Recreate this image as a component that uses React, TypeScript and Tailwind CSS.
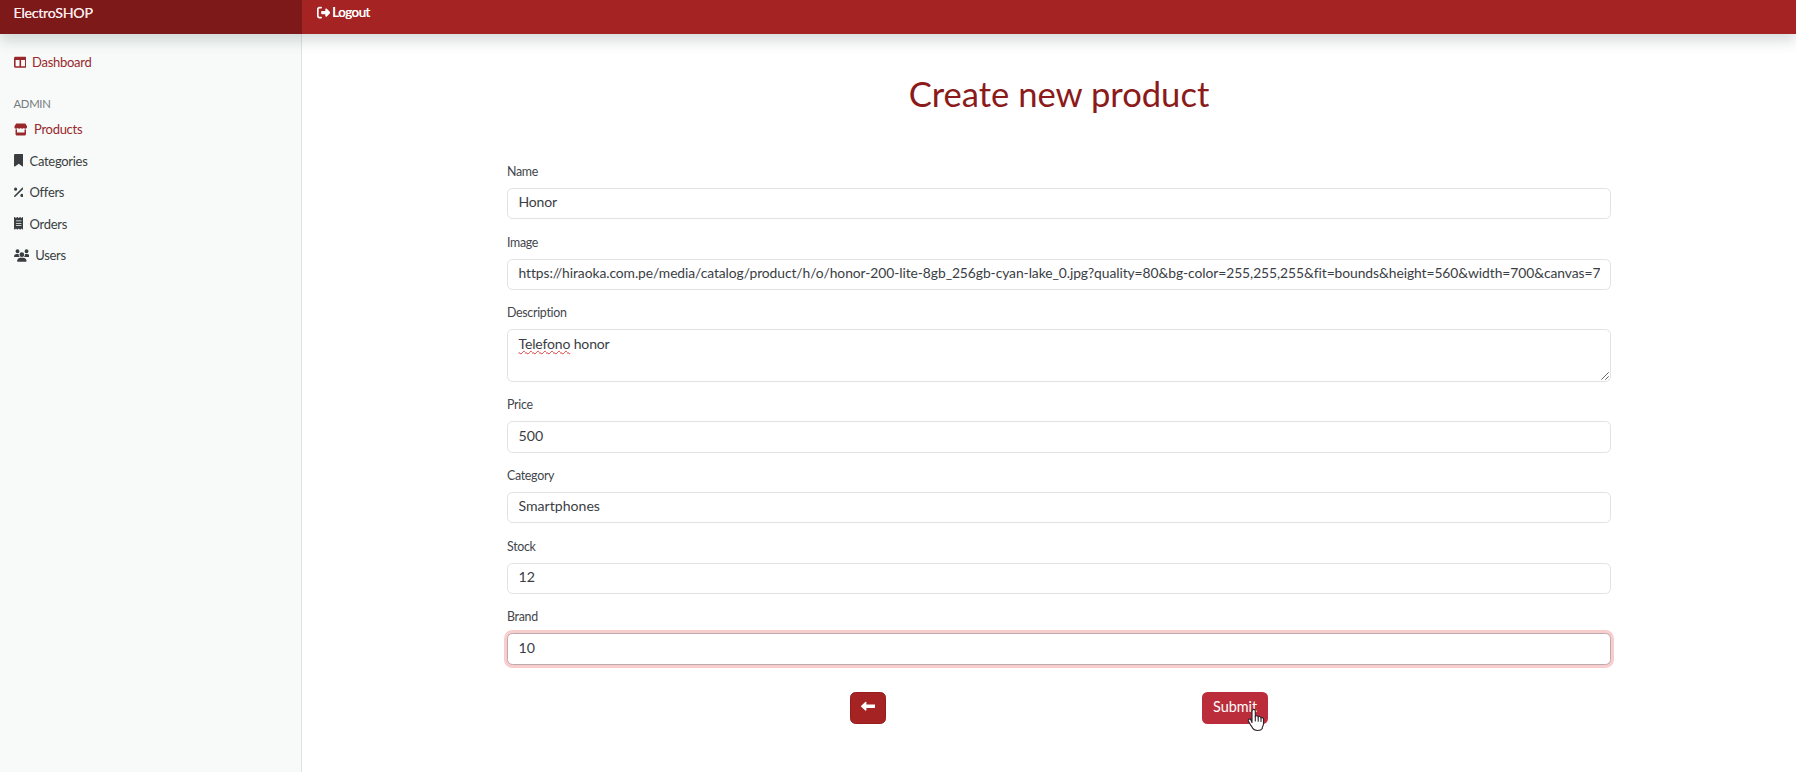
import React from "react";
import {
  FaBookmark,
  FaLeftLong,
  FaPercent,
  FaReceipt,
  FaRightFromBracket,
  FaStore,
  FaTableColumns,
  FaUsers,
} from "react-icons/fa6";

const baseInput =
  "block h-[31.5px] w-full rounded-[5.5px] border bg-white px-[10.5px] pb-[3.5px] text-[#3a3e44] outline-none";
const idleBorder = "border-[#dfe3e3]";
const focusBorder = "border-[#bda9ac] shadow-[0_0_0_3px_#f8cdcd]";

function Label({ children }: { children: React.ReactNode }) {
  return (
    <label className="mb-[8px] block h-[17px] text-[12.4px] leading-[17.5px] tracking-[-0.3px] text-[#42464b]">
      {children}
    </label>
  );
}

type FieldProps = { label: string; value: string; focused?: boolean; textClass?: string };

function Field({ label, value, focused, textClass = "text-[14.2px]" }: FieldProps) {
  return (
    <div>
      <Label>{label}</Label>
      <input
        className={`${baseInput} ${focused ? focusBorder : idleBorder} ${textClass}`}
        defaultValue={value}
        spellCheck={false}
      />
    </div>
  );
}

function Header() {
  return (
    <header className="relative z-10 flex h-[33.5px] shrink-0 bg-[#a52323] shadow-[0_7px_14px_rgba(60,80,80,0.2)]">
      <div className="w-[302px] shrink-0 bg-[#7d1919] pl-[13.5px] text-[14.2px] leading-[25px] tracking-[-0.25px] text-[#fbeaea] [text-shadow:0_0_0.4px_#fbeaea]">
        ElectroSHOP
      </div>
      <a className="flex h-[25px] items-center gap-[2.5px] pl-[14.5px] text-[13.3px] font-medium text-white [text-shadow:0_0_0.5px_#fff]">
        <FaRightFromBracket className="size-[13.3px]" />
        <span className="tracking-[-0.5px]">Logout</span>
      </a>
    </header>
  );
}

function Sidebar() {
  return (
    <nav className="w-[302px] shrink-0 border-r border-[#dfe2e2] bg-[#f7faf9] pl-[13.5px] text-[13px] leading-[20px] tracking-[-0.29px] text-[#3a3e40]">
      <a className="mt-[18.5px] flex h-[20px] items-center gap-[6px] text-[#99282c]">
        <FaTableColumns className="size-[12.6px]" />
        Dashboard
      </a>
      <h6 className="mt-[21.5px] h-[20px] text-[11.3px] text-[#757b7d]">ADMIN</h6>
      <a className="mt-[5.5px] flex h-[20px] items-center gap-[7px] text-[#99282c]">
        <FaStore className="h-[13px] w-[13.5px]" />
        Products
      </a>
      <a className="mt-[11.5px] flex h-[20px] items-center gap-[6.5px]">
        <FaBookmark className="h-[12.6px] w-[9.5px]" />
        Categories
      </a>
      <a className="mt-[11.5px] flex h-[20px] items-center gap-[6.5px]">
        <FaPercent className="h-[12.6px] w-[9.5px]" />
        Offers
      </a>
      <a className="mt-[11.5px] flex h-[20px] items-center gap-[6.5px]">
        <FaReceipt className="h-[12.6px] w-[9.5px]" />
        Orders
      </a>
      <a className="mt-[11.5px] flex h-[20px] items-center gap-[6px]">
        <FaUsers className="h-[13px] w-[15.7px]" />
        Users
      </a>
    </nav>
  );
}

function HandCursor() {
  return (
    <svg className="absolute top-[16px] left-[43px] h-[24px] w-[20px]" viewBox="0 0 20 24">
      <path
        d="M7 14.5V3.2C7 .8 10.3.8 10.3 3.2v5.2c.5-1 2.7-.8 2.9.6.7-.9 2.6-.5 2.8.9.9-.6 2.5-.1 2.5 1.4v4.4c0 1.7-.6 2.4-1.2 3.5v1.3c-1.5 2.6-8.1 2.6-9.6-.2-.4-1.6-1.7-2.6-2.4-3.9l-1.9-3.3c-1-1.8 1.2-2.9 2.3-1.5z"
        fill="#fff"
        stroke="#2c2226"
        strokeWidth="1.1"
        strokeLinejoin="round"
      />
      <path d="M10.3 8.5v4.4M13.2 9v4.2M16 9.9v3.6" fill="none" stroke="#2c2226" strokeWidth="1.1" strokeLinecap="round" />
    </svg>
  );
}

export default function App() {
  return (
    <div className="flex h-[772px] flex-col overflow-hidden bg-white font-[Lato,sans-serif] [font-variant-ligatures:none]">
      <Header />
      <div className="flex min-h-0 flex-1">
        <Sidebar />
        <main className="flex flex-1 flex-col items-center pl-[20px]">
          <h1 className="mt-[39px] h-[42px] text-[34.6px] leading-[42px] text-[#8b1a1a]">Create new product</h1>
          <form className="mt-[48.4px] flex w-[1104px] flex-col gap-[14.3px]">
            <Field label="Name" value="Honor" textClass="text-[14px] tracking-[-0.15px]" />
            <Field
              label="Image"
              value="https://hiraoka.com.pe/media/catalog/product/h/o/honor-200-lite-8gb_256gb-cyan-lake_0.jpg?quality=80&bg-color=255,255,255&fit=bounds&height=560&width=700&canvas=700:560"
              textClass="text-[13.85px] tracking-[-0.073px]"
            />
            <div>
              <Label>Description</Label>
              <div className="relative h-[52.3px] w-full rounded-[5.5px] border border-[#dfe3e3] px-[10.5px] pt-[3px] text-[14px] leading-[21px] tracking-[-0.15px] text-[#3a3e44]">
                <span className="underline decoration-[#dd3c3c] decoration-wavy decoration-1 underline-offset-[1px] [text-decoration-skip-ink:none]">
                  Telefono
                </span>{" "}
                honor
                <svg className="absolute right-[1px] bottom-[1px] size-[8px]" viewBox="0 0 8 8">
                  <path d="M0.3 7.7 7.7 0.3M4.3 7.7 7.7 4.3" stroke="#666" strokeWidth="1" />
                </svg>
              </div>
            </div>
            <Field label="Price" value="500" />
            <Field label="Category" value="Smartphones" textClass="text-[14.1px]" />
            <Field label="Stock" value="12" />
            <Field label="Brand" value="10" focused />
            <div className="mt-[12.6px] flex justify-center gap-[316.5px]">
              <button
                type="button"
                className="flex h-[32px] w-[35.7px] items-center justify-center rounded-[5.5px] border border-[#961d1d] bg-[#a52323] pb-[3px] text-white"
              >
                <FaLeftLong className="size-[14.4px]" />
              </button>
              <button
                type="button"
                className="relative h-[32px] w-[65.5px] rounded-[5.5px] bg-[#bb2d3b] pb-[3px] text-[14.4px] text-white"
              >
                Submit
                <HandCursor />
              </button>
            </div>
          </form>
        </main>
      </div>
    </div>
  );
}
